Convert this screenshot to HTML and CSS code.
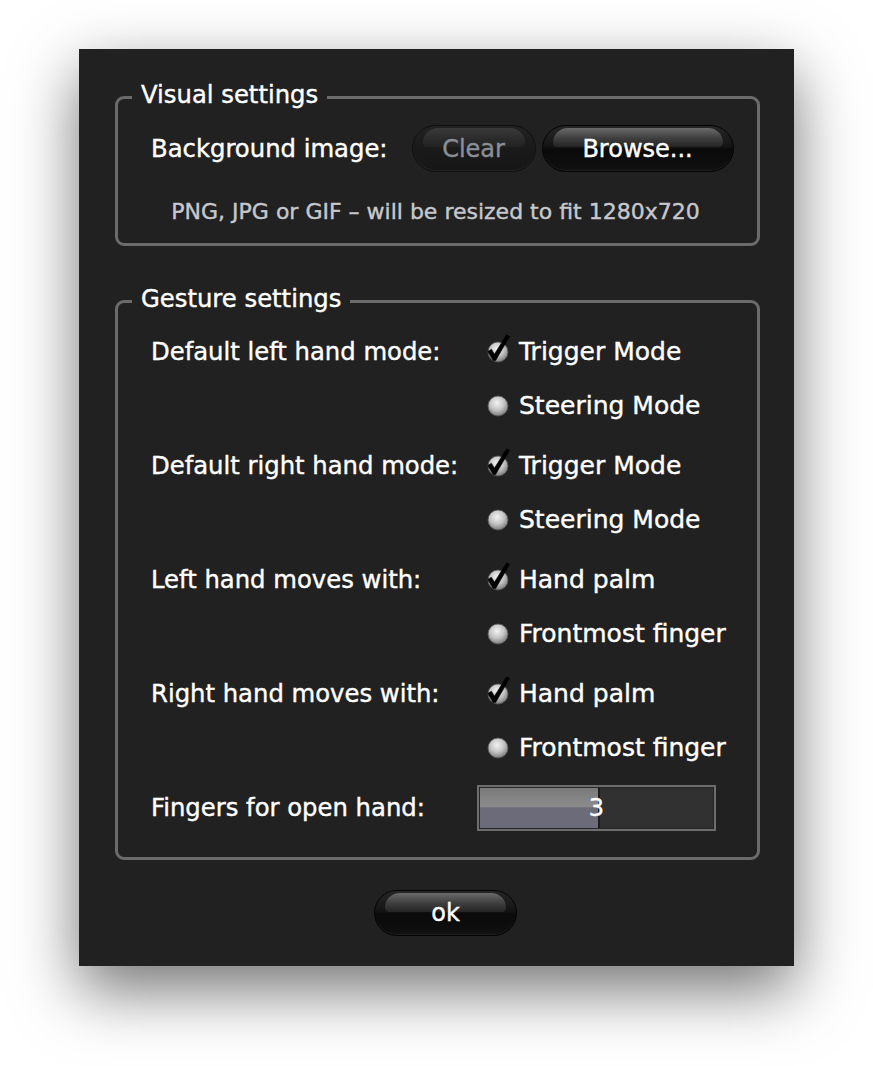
FILE: index.html
```html
<!DOCTYPE html>
<html>
<head>
<meta charset="utf-8">
<link rel="stylesheet" href="styles.css">
</head>
<body>
<div class="window">
  <section class="group visual">
    <div class="group-title">Visual settings</div>
    <div class="bg-row">
      <span class="label">Background image:</span>
      <div class="btns">
        <button class="btn btn-clear" disabled>Clear</button>
        <button class="btn btn-browse">Browse...</button>
      </div>
    </div>
    <div class="note">PNG, JPG or GIF – will be resized to fit 1280x720</div>
  </section>

  <section class="group gesture">
    <div class="group-title">Gesture settings</div>
    <div class="settings">
      <div class="label">Default left hand mode:</div>
      <div class="options">
        <div class="opt"><svg class="radio" viewBox="0 0 24 24"><use href="#sphere"/><path class="check" d="M1.8 11.6 L5.4 9.2 L8.4 14.2 L20.6 -5.2 L23.6 -3.6 L9.6 20.6 L7.2 20.6 Z"/></svg><span>Trigger Mode</span></div>
        <div class="opt"><svg class="radio" viewBox="0 0 24 24"><use href="#sphere"/></svg><span>Steering Mode</span></div>
      </div>

      <div class="label">Default right hand mode:</div>
      <div class="options">
        <div class="opt"><svg class="radio" viewBox="0 0 24 24"><use href="#sphere"/><path class="check" d="M1.8 11.6 L5.4 9.2 L8.4 14.2 L20.6 -5.2 L23.6 -3.6 L9.6 20.6 L7.2 20.6 Z"/></svg><span>Trigger Mode</span></div>
        <div class="opt"><svg class="radio" viewBox="0 0 24 24"><use href="#sphere"/></svg><span>Steering Mode</span></div>
      </div>

      <div class="label">Left hand moves with:</div>
      <div class="options">
        <div class="opt"><svg class="radio" viewBox="0 0 24 24"><use href="#sphere"/><path class="check" d="M1.8 11.6 L5.4 9.2 L8.4 14.2 L20.6 -5.2 L23.6 -3.6 L9.6 20.6 L7.2 20.6 Z"/></svg><span>Hand palm</span></div>
        <div class="opt"><svg class="radio" viewBox="0 0 24 24"><use href="#sphere"/></svg><span>Frontmost finger</span></div>
      </div>

      <div class="label">Right hand moves with:</div>
      <div class="options">
        <div class="opt"><svg class="radio" viewBox="0 0 24 24"><use href="#sphere"/><path class="check" d="M1.8 11.6 L5.4 9.2 L8.4 14.2 L20.6 -5.2 L23.6 -3.6 L9.6 20.6 L7.2 20.6 Z"/></svg><span>Hand palm</span></div>
        <div class="opt"><svg class="radio" viewBox="0 0 24 24"><use href="#sphere"/></svg><span>Frontmost finger</span></div>
      </div>

      <div class="label">Fingers for open hand:</div>
      <div class="options">
        <div class="opt">
          <div class="slider">
            <div class="slider-fill" style="width: 50%"></div>
            <span class="slider-value">3</span>
          </div>
        </div>
      </div>
    </div>
  </section>

  <div class="footer">
    <button class="btn btn-ok">ok</button>
  </div>
</div>

<svg class="defs" width="0" height="0">
  <defs>
    <radialGradient id="sph" cx="45%" cy="35%" r="65%">
      <stop offset="0" stop-color="#f2f2f2"/>
      <stop offset="0.55" stop-color="#c4c4c4"/>
      <stop offset="1" stop-color="#7c7c7c"/>
    </radialGradient>
    <g id="sphere">
      <circle cx="12" cy="12" r="10" fill="url(#sph)" stroke="#5a5a5a" stroke-width="0.8"/>
    </g>
  </defs>
</svg>
</body>
</html>
```

FILE: styles.css
```css
html, body {
  margin: 0;
  padding: 0;
  background: #ffffff;
}

body {
  font-family: "DejaVu Sans", "Lucida Grande", Verdana, sans-serif;
  color: #ffffff;
  padding-bottom: 100px;
  -webkit-text-stroke: 0.4px currentColor;
}

.window {
  box-sizing: border-box;
  width: 715px;
  height: 917px;
  margin: 49px 0 0 79px;
  padding: 47px 34px 0 36px;
  background: #212121;
  box-shadow: 0 24px 60px rgba(0, 0, 0, 0.55);
  display: flex;
  flex-direction: column;
}

.group {
  position: relative;
  border: 3px solid #6b6b6b;
  border-radius: 9px;
}

.group-title {
  position: absolute;
  top: -18px;
  left: 14px;
  padding: 0 9px;
  background: #212121;
  font-size: 24.3px;
  line-height: 28px;
  white-space: nowrap;
}

.label {
  font-size: 24.3px;
  line-height: 28px;
  white-space: nowrap;
}

/* Visual settings */
.visual {
  height: 150px;
  box-sizing: border-box;
  padding: 26px 0 0 33px;
}

.bg-row {
  display: flex;
  align-items: center;
  gap: 24px;
}

.btns {
  display: flex;
  gap: 6px;
}

.btn {
  position: relative;
  isolation: isolate;
  box-sizing: border-box;
  height: 47px;
  border: 1px solid #030303;
  border-radius: 24px;
  font-family: "DejaVu Sans", "Lucida Grande", Verdana, sans-serif;
  font-size: 24px;
  color: #ffffff;
  -webkit-text-stroke: 0.4px currentColor;
  padding: 0;
  background: linear-gradient(to bottom, #262626 0%, #141414 46%, #0a0a0a 52%, #101010 100%);
  box-shadow: inset 0 -1px 0 rgba(255, 255, 255, 0.06);
}

.btn::before {
  content: "";
  position: absolute;
  z-index: -1;
  left: 10px;
  right: 10px;
  top: 2px;
  height: 19px;
  border-radius: 18px 18px 5px 5px;
  background: linear-gradient(to bottom, #6a6a6a 0%, #3e3e3e 55%, #242424 100%);
}

.btn-clear {
  width: 124px;
  color: #8b8e95;
  background: linear-gradient(to bottom, #222 0%, #1a1a1a 50%, #161616 100%);
  border-color: #101010;
}

.btn-clear::before {
  background: linear-gradient(to bottom, #3a3a3a 0%, #2a2a2a 60%, #222 100%);
}

.btn-browse {
  width: 192px;
}

.btn-ok {
  width: 143px;
  height: 46px;
}

.note {
  margin-top: 26px;
  margin-left: -37px;
  text-align: center;
  font-size: 22px;
  line-height: 28px;
  color: #c6c8cd;
  white-space: nowrap;
}

/* Gesture settings */
.gesture {
  margin-top: 54px;
  height: 560px;
  box-sizing: border-box;
  padding: 22px 0 0 33px;
}

.settings {
  display: grid;
  grid-template-columns: 335px 1fr;
  row-gap: 6px;
}

.settings .label {
  height: 54px;
  display: flex;
  align-items: center;
}

.options {
  display: flex;
  flex-direction: column;
}

.opt {
  height: 54px;
  display: flex;
  align-items: center;
  gap: 9px;
  font-size: 25px;
  line-height: 28px;
  white-space: nowrap;
}

.radio {
  width: 24px;
  height: 24px;
  overflow: visible;
  flex: none;
}

.check {
  fill: #000000;
  stroke: #000000;
  stroke-width: 0.6;
  stroke-linejoin: round;
}

.defs {
  position: absolute;
  width: 0;
  height: 0;
}

.slider {
  position: relative;
  box-sizing: border-box;
  margin-left: -9px;
  width: 239px;
  height: 46px;
  border: 2px solid #6e6e6e;
  background: #313131;
  box-shadow: inset 0 0 0 1px #262626;
  display: flex;
  align-items: center;
  justify-content: center;
}

.slider-fill {
  position: absolute;
  left: 1px;
  top: 1px;
  bottom: 1px;
  border-right: 2px solid #1c1c1c;
  background: linear-gradient(to bottom, #7a7a7a 0%, #8c8c8c 48%, #6c6b79 49%, #6c6b79 100%);
}

.slider-value {
  position: relative;
  font-size: 24px;
  line-height: 28px;
  color: #ffffff;
}

.footer {
  margin-top: 30px;
  display: flex;
  justify-content: center;
  padding-left: 16px;
}
```
